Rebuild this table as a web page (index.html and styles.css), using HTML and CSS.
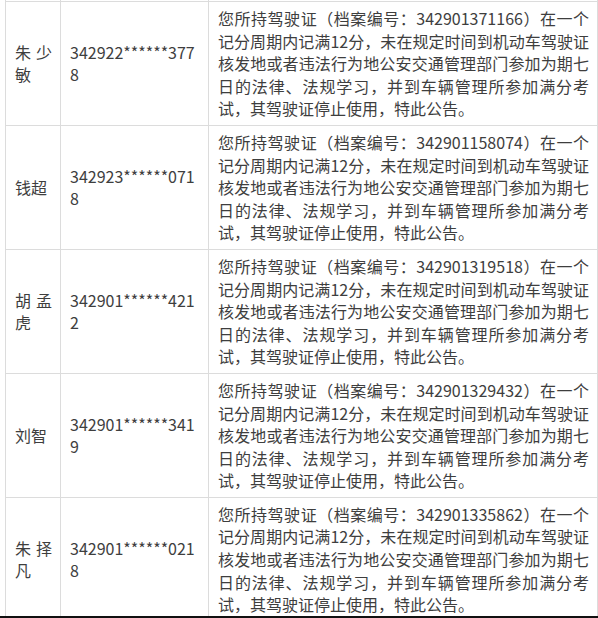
FILE: index.html
```html
<!DOCTYPE html>
<html lang="zh-CN">
<head>
<meta charset="utf-8">
<title>公告</title>
<link rel="stylesheet" href="styles.css">
</head>
<body>
<table class="notice">
  <colgroup>
    <col class="c-name">
    <col class="c-id">
    <col class="c-text">
  </colgroup>
  <tbody>
    <tr class="cut"><td></td><td></td><td></td></tr>
    <tr>
      <td class="name">朱少敏</td>
      <td class="id">342922******3778</td>
      <td class="text">您所持驾驶证（档案编号：342901371166）在一个记分周期内记满12分，未在规定时间到机动车驾驶证核发地或者违法行为地公安交通管理部门参加为期七日的法律、法规学习，并到车辆管理所参加满分考试，其驾驶证停止使用，特此公告。</td>
    </tr>
    <tr>
      <td class="name">钱超</td>
      <td class="id">342923******0718</td>
      <td class="text">您所持驾驶证（档案编号：342901158074）在一个记分周期内记满12分，未在规定时间到机动车驾驶证核发地或者违法行为地公安交通管理部门参加为期七日的法律、法规学习，并到车辆管理所参加满分考试，其驾驶证停止使用，特此公告。</td>
    </tr>
    <tr>
      <td class="name">胡孟虎</td>
      <td class="id">342901******4212</td>
      <td class="text">您所持驾驶证（档案编号：342901319518）在一个记分周期内记满12分，未在规定时间到机动车驾驶证核发地或者违法行为地公安交通管理部门参加为期七日的法律、法规学习，并到车辆管理所参加满分考试，其驾驶证停止使用，特此公告。</td>
    </tr>
    <tr>
      <td class="name">刘智</td>
      <td class="id">342901******3419</td>
      <td class="text">您所持驾驶证（档案编号：342901329432）在一个记分周期内记满12分，未在规定时间到机动车驾驶证核发地或者违法行为地公安交通管理部门参加为期七日的法律、法规学习，并到车辆管理所参加满分考试，其驾驶证停止使用，特此公告。</td>
    </tr>
    <tr>
      <td class="name">朱择凡</td>
      <td class="id">342901******0218</td>
      <td class="text">您所持驾驶证（档案编号：342901335862）在一个记分周期内记满12分，未在规定时间到机动车驾驶证核发地或者违法行为地公安交通管理部门参加为期七日的法律、法规学习，并到车辆管理所参加满分考试，其驾驶证停止使用，特此公告。</td>
    </tr>
  </tbody>
</table>
<div class="edge"></div>
</body>
</html>
```
FILE: styles.css
```css
html, body {
  margin: 0;
  padding: 0;
  background: #fff;
  overflow: hidden;
  height: 618px;
}
body {
  font-family: "Noto Sans CJK SC", "Noto Sans", sans-serif;
  font-size: 16px;
  color: #3e3e3e;
}
.notice {
  border-collapse: collapse;
  table-layout: fixed;
  width: 592px;
  margin-left: 5px;
}
.c-name { width: 55px; }
.c-id { width: 148px; }
.c-text { width: 389px; }
.notice td {
  border: 1px solid #dcdcdc;
  padding: 5px 8px 5px 9px;
  line-height: 22.6px;
  text-align: justify;
  vertical-align: middle;
  word-break: break-all;
}
.notice tr.cut td {
  border-top: 0;
  padding: 0;
  height: 1px;
  line-height: 1px;
}
.notice td.text {
  vertical-align: top;
}
.edge {
  position: fixed;
  left: 0;
  right: 0;
  bottom: 0;
  height: 2px;
  background: #111;
}
```
